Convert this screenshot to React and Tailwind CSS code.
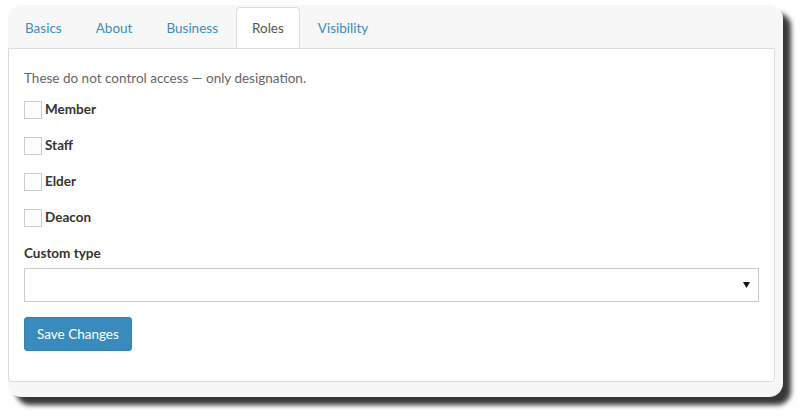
import { useState } from "react";

const TABS = ["Basics", "About", "Business", "Roles", "Visibility"];
const ROLES = ["Member", "Staff", "Elder", "Deacon"];

function App() {
  const [active, setActive] = useState("Roles");
  const [checked, setChecked] = useState({});

  return (
    <div className="w-[806px] h-[420px] bg-white pt-[5px] pl-[8px] font-['Lato',sans-serif]">
      <div className="w-[775px] h-[392px] rounded-[14px] bg-[#f7f7f7] shadow-[8px_8px_5px_rgba(0,0,0,0.78)] pr-[8px] flex flex-col">
        {/* tab strip */}
        <div className="h-[43px] flex items-end pl-px gap-[2px]">
          {TABS.map((t) => (
            <button
              key={t}
              onClick={() => setActive(t)}
              className={`h-[42px] px-[15px] text-[13.5px] rounded-t-[4px] -mb-px border ${
                t === active
                  ? "bg-white border-[#ddd] border-b-white text-[#555]"
                  : "border-transparent text-[#3c8dbc]"
              }`}
            >
              {t}
            </button>
          ))}
        </div>

        {/* panel */}
        <div className="h-[334px] bg-white border border-[#ddd] rounded-b-[4px] pl-[15px] pr-[15px] pt-[19px]">
          <p className="text-[13.5px] leading-[20px] text-[#666]">These do not control access — only designation.</p>

          <div className="mt-[12px] flex flex-col gap-[16px]">
            {ROLES.map((r) => (
              <label key={r} className="h-[20px] flex items-center gap-[3px] cursor-pointer">
                <span
                  onClick={() => setChecked({ ...checked, [r]: !checked[r] })}
                  className="w-[18px] h-[18px] border border-[#ccc] bg-[#fcfcfc] flex items-center justify-center text-[12px] text-[#3c8dbc]"
                >
                  {checked[r] ? "✓" : ""}
                </span>
                <span className="text-[13.5px] leading-[20px] -mt-[2px] font-bold text-[#333]">{r}</span>
              </label>
            ))}
          </div>

          <div className="mt-[15px] text-[13.5px] leading-[20px] font-bold text-[#333]">Custom type</div>
          <div className="mt-[5px] h-[34px] border border-[#ccc] flex items-center justify-end pr-[8px]">
            <svg width="7" height="6" viewBox="0 0 7 6">
              <path d="M0 0h7L3.5 6z" fill="#111" />
            </svg>
          </div>

          <button className="mt-[15px] h-[34px] px-[12px] rounded-[3px] bg-[#3a8bbd] border border-[#3580ad] text-white text-[13.5px]">
            Save Changes
          </button>
        </div>
      </div>
    </div>
  );
}

export default App;
